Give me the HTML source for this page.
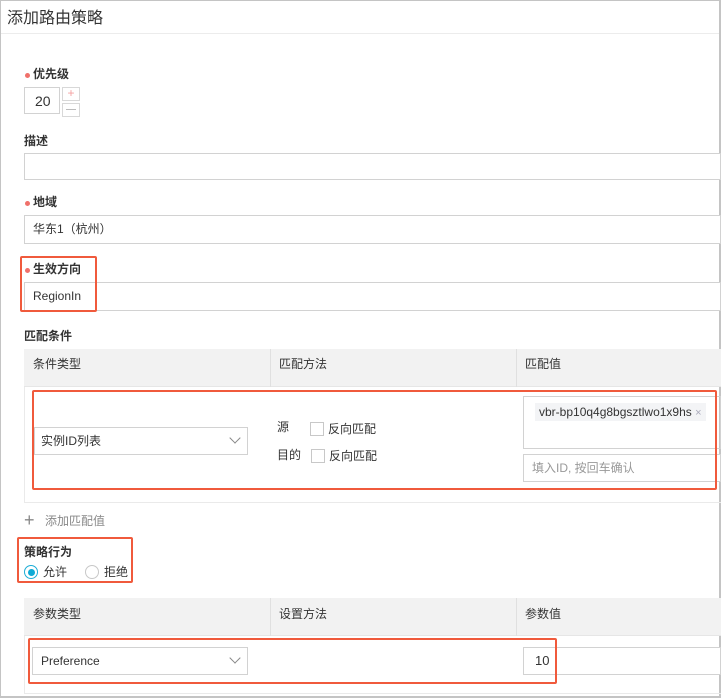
<!DOCTYPE html>
<html><head><meta charset="utf-8"><style>
*{box-sizing:border-box;margin:0;padding:0}
body{width:721px;height:700px;position:relative;background:#fff;font-family:"Liberation Sans","Noto Sans CJK SC",sans-serif;color:#333;font-size:12px;overflow:hidden}
.a{position:absolute}
.frame{left:0;top:0;width:721px;height:698px;border:1px solid #c4c4c4;border-right:2px solid #c4c4c4;border-bottom:2px solid #c4c4c4}
.lbl{font-weight:bold;font-size:12px;color:#333;line-height:14px}
.dot{width:5px;height:5px;border-radius:50%;background:#f0706a}
.inp{border:1px solid #d2d2d2;background:#fff;line-height:26px;padding-left:8px;font-size:12px}
.red{border:2px solid #f05a3c;border-radius:2px}
.th{background:#f2f2f2;border-bottom:1px solid #e6e6e6}
.vl{width:1px;background:#e0e0e0}
.cb{width:14px;height:14px;border:1px solid #c8c8c8;background:#fff}
.chev{width:8px;height:8px;border-right:1px solid #888;border-bottom:1px solid #888;transform:rotate(45deg)}
</style></head><body>
<div class="a frame"></div>
<div class="a" style="left:7px;top:4px;font-size:16px;color:#333">添加路由策略</div>
<div class="a" style="left:1px;top:33px;width:718px;height:1px;background:#ececec"></div>

<div class="a dot" style="left:25px;top:73px"></div>
<div class="a lbl" style="left:33px;top:67px">优先级</div>
<div class="a inp" style="left:24px;top:87px;width:36px;height:27px;padding-left:10px;font-size:14px">20</div>
<div class="a" style="left:62px;top:87px;width:18px;height:14px;border:1px solid #d8d8d8;color:#f5a0a0;text-align:center;line-height:11px;font-size:12px">+</div>
<div class="a" style="left:62px;top:103px;width:18px;height:14px;border:1px solid #d8d8d8"></div>
<div class="a" style="left:66px;top:109px;width:10px;height:1px;background:#bbb"></div>

<div class="a lbl" style="left:24px;top:134px">描述</div>
<div class="a inp" style="left:24px;top:153px;width:697px;height:27px"></div>

<div class="a dot" style="left:25px;top:201px"></div>
<div class="a lbl" style="left:33px;top:195px">地域</div>
<div class="a inp" style="left:24px;top:215px;width:697px;height:29px;line-height:27px">华东1（杭州）</div>

<div class="a dot" style="left:25px;top:268px"></div>
<div class="a lbl" style="left:33px;top:262px">生效方向</div>
<div class="a inp" style="left:24px;top:282px;width:697px;height:29px;line-height:27px">RegionIn</div>
<div class="a red" style="left:20px;top:256px;width:77px;height:56px"></div>

<div class="a lbl" style="left:24px;top:329px">匹配条件</div>
<div class="a" style="left:24px;top:349px;width:697px;height:154px;border:1px solid #eaeaea;border-right:none"></div>
<div class="a th" style="left:24px;top:349px;width:697px;height:38px"></div>
<div class="a vl" style="left:270px;top:349px;height:38px"></div>
<div class="a vl" style="left:516px;top:349px;height:38px"></div>
<div class="a" style="left:33px;top:357px;line-height:14px">条件类型</div>
<div class="a" style="left:279px;top:357px;line-height:14px">匹配方法</div>
<div class="a" style="left:525px;top:357px;line-height:14px">匹配值</div>

<div class="a inp" style="left:34px;top:427px;width:214px;height:28px;padding-left:6px">实例ID列表</div>
<div class="a chev" style="left:231px;top:434px"></div>
<div class="a" style="left:277px;top:420px;line-height:14px">源</div>
<div class="a cb" style="left:310px;top:422px"></div>
<div class="a" style="left:328px;top:422px;line-height:14px">反向匹配</div>
<div class="a" style="left:277px;top:448px;line-height:14px">目的</div>
<div class="a cb" style="left:311px;top:449px"></div>
<div class="a" style="left:329px;top:449px;line-height:14px">反向匹配</div>

<div class="a" style="left:523px;top:396px;width:198px;height:53px;border:1px solid #d2d2d2"></div>
<div class="a" style="left:535px;top:403px;width:171px;height:18px;background:#f3f4f6;line-height:18px;padding-left:4px;font-size:12px;color:#333">vbr-bp10q4g8bgsztlwo1x9hs <span style="color:#aab;font-size:11px">×</span></div>
<div class="a inp" style="left:523px;top:454px;width:198px;height:28px;color:#999;line-height:26px">填入ID, 按回车确认</div>
<div class="a red" style="left:32px;top:390px;width:685px;height:100px"></div>

<div class="a" style="left:24px;top:513px;font-size:18px;color:#888;line-height:14px;font-weight:300">+</div>
<div class="a" style="left:45px;top:514px;color:#888;line-height:14px">添加匹配值</div>

<div class="a lbl" style="left:24px;top:545px">策略行为</div>
<div class="a" style="left:24px;top:565px;width:14px;height:14px;border:1px solid #1dadd6;border-radius:50%"></div>
<div class="a" style="left:27.5px;top:568.5px;width:7px;height:7px;background:#0eaad6;border-radius:50%"></div>
<div class="a" style="left:43px;top:565px;line-height:14px">允许</div>
<div class="a" style="left:85px;top:565px;width:14px;height:14px;border:1px solid #c8c8c8;border-radius:50%"></div>
<div class="a" style="left:104px;top:565px;line-height:14px">拒绝</div>
<div class="a red" style="left:17px;top:537px;width:116px;height:46px"></div>

<div class="a" style="left:24px;top:598px;width:697px;height:96px;border:1px solid #eaeaea;border-right:none"></div>
<div class="a th" style="left:24px;top:598px;width:697px;height:38px"></div>
<div class="a vl" style="left:270px;top:598px;height:38px"></div>
<div class="a vl" style="left:516px;top:598px;height:38px"></div>
<div class="a" style="left:33px;top:607px;line-height:14px">参数类型</div>
<div class="a" style="left:279px;top:607px;line-height:14px">设置方法</div>
<div class="a" style="left:525px;top:607px;line-height:14px">参数值</div>
<div class="a inp" style="left:32px;top:647px;width:216px;height:28px">Preference</div>
<div class="a chev" style="left:231px;top:654px"></div>
<div class="a inp" style="left:523px;top:647px;width:198px;height:28px;padding-left:11px;font-size:13px">10</div>
<div class="a red" style="left:28px;top:638px;width:529px;height:46px"></div>
</body></html>
